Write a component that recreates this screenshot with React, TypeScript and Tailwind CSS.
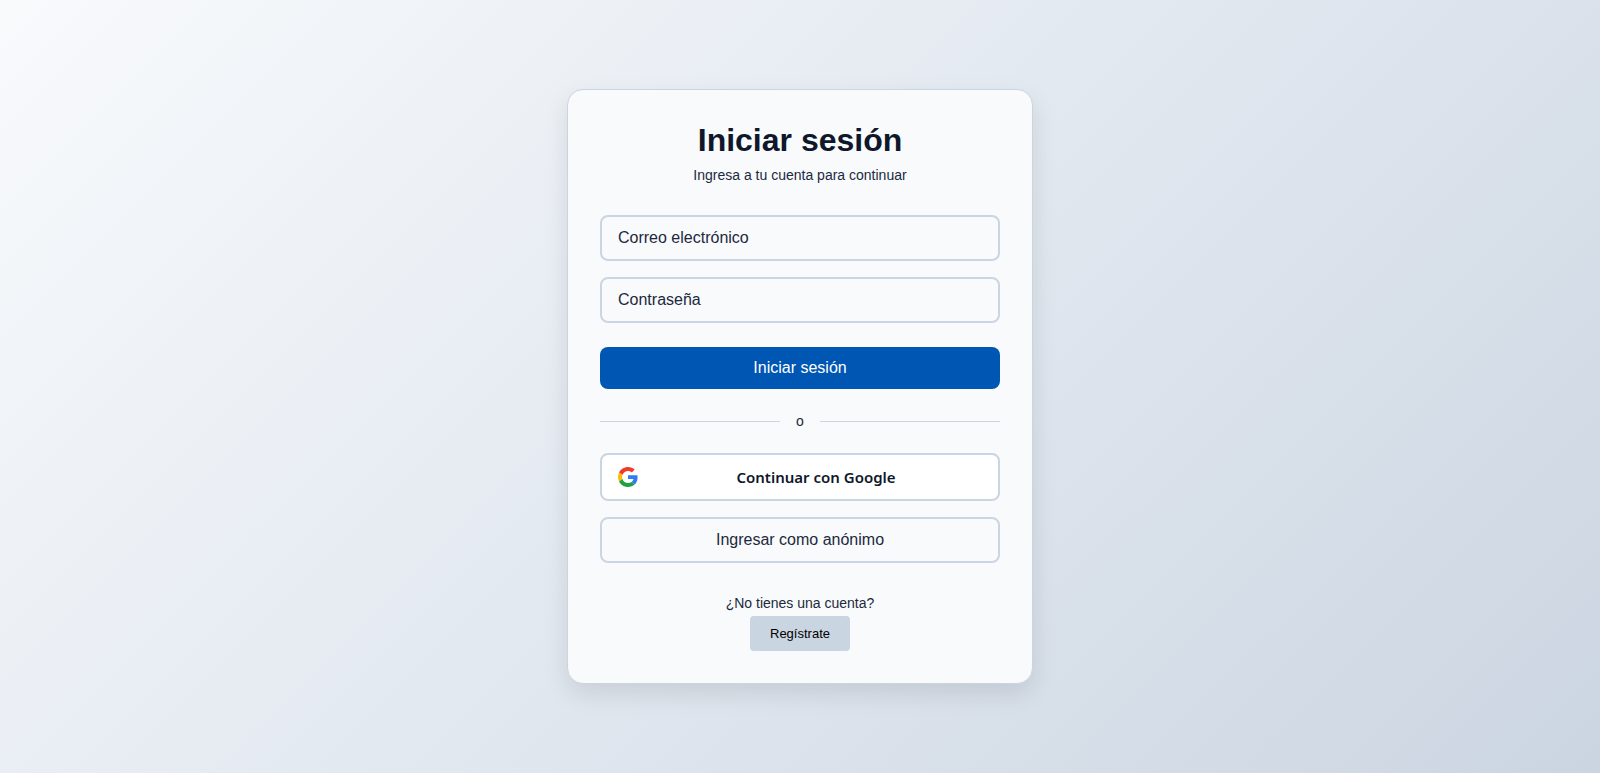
import { useState } from "react";

const fieldClass =
  "w-full rounded-lg border-2 border-slate-300 bg-slate-50 px-4 py-2 text-base leading-[26px] text-slate-800 placeholder:text-slate-800";

function GoogleLogo() {
  return (
    <svg viewBox="0 0 48 48" className="size-5 shrink-0" aria-hidden="true">
      <path fill="#F03A2B" d="M24 9.5c3.54 0 6.71 1.22 9.21 3.6l6.85-6.85C35.9 2.38 30.47 0 24 0 14.62 0 6.51 5.38 2.56 13.22l7.98 6.19C12.43 13.72 17.74 9.5 24 9.5z" />
      <path fill="#2F7BF6" d="M46.98 24.55c0-1.57-.15-3.09-.38-4.55H24v9.02h12.94c-.58 2.96-2.26 5.48-4.78 7.18l7.73 6c4.51-4.18 7.09-10.36 7.09-17.65z" />
      <path fill="#FBBC05" d="M10.53 28.59c-.48-1.45-.76-2.99-.76-4.59s.27-3.14.76-4.59l-7.98-6.19C.92 16.46 0 20.12 0 24c0 3.88.92 7.54 2.56 10.78l7.97-6.19z" />
      <path fill="#1FA23F" d="M24 48c6.48 0 11.93-2.13 15.89-5.81l-7.73-6c-2.15 1.45-4.92 2.3-8.16 2.3-6.26 0-11.57-4.22-13.47-9.91l-7.98 6.19C6.51 42.62 14.62 48 24 48z" />
    </svg>
  );
}

export default function App() {
  const [email, setEmail] = useState("");
  const [password, setPassword] = useState("");

  return (
    <main className="flex min-h-screen items-center justify-center bg-linear-[135deg,#f8fafc,#e2e8f0_50%,#cbd5e1] font-['Liberation_Sans',Arial,sans-serif] text-slate-800">
      <section className="w-full max-w-[466px] rounded-2xl border border-slate-300 bg-slate-50 p-8 shadow-[0_10px_25px_rgba(0,0,0,0.1)]">
        <header className="mb-8 text-center">
          <h1 className="mb-2 text-[32px] leading-[37px] font-bold text-slate-900">Iniciar sesión</h1>
          <p className="text-sm leading-4">Ingresa a tu cuenta para continuar</p>
        </header>

        <form onSubmit={(event) => event.preventDefault()}>
          <div className="flex flex-col gap-4">
            <input
              type="email"
              aria-label="Correo electrónico"
              placeholder="Correo electrónico"
              value={email}
              onChange={(event) => setEmail(event.target.value)}
              className={fieldClass}
            />
            <input
              type="password"
              aria-label="Contraseña"
              placeholder="Contraseña"
              value={password}
              onChange={(event) => setPassword(event.target.value)}
              className={fieldClass}
            />
          </div>
          <button type="submit" className="mt-6 w-full rounded-lg bg-[#0056b3] py-2 text-base leading-[26px] text-white">
            Iniciar sesión
          </button>
        </form>

        <div className="my-6 flex items-center gap-4">
          <span className="h-px flex-1 bg-slate-300" />
          <span className="text-sm leading-4">o</span>
          <span className="h-px flex-1 bg-slate-300" />
        </div>

        <div className="flex flex-col gap-4">
          <button
            type="button"
            className="flex w-full items-center gap-3 rounded-lg border-2 border-slate-300 bg-white px-4 py-3 font-['Segoe_UI','Noto_Sans',sans-serif] text-[15px] leading-5 font-semibold text-slate-900"
          >
            <GoogleLogo />
            <span className="flex-1 text-center">Continuar con Google</span>
          </button>
          <button type="button" className="w-full rounded-lg border-2 border-slate-300 py-2 text-base leading-[26px]">
            Ingresar como anónimo
          </button>
        </div>

        <footer className="mt-8 flex flex-col items-center gap-1 text-center">
          <p className="text-sm leading-[17px]">¿No tienes una cuenta?</p>
          <button type="button" className="rounded bg-slate-300 px-5 py-2 text-[13px] leading-[19px] text-black">
            Regístrate
          </button>
        </footer>
      </section>
    </main>
  );
}
